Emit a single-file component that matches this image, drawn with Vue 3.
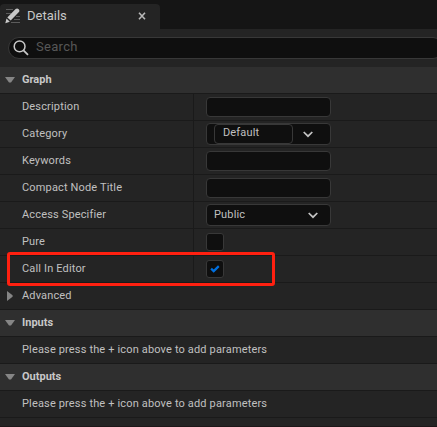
<script setup>
import { ref } from 'vue'

const rows = ref([
  { label: 'Description', kind: 'text' },
  { label: 'Category', kind: 'editable', value: 'Default' },
  { label: 'Keywords', kind: 'text' },
  { label: 'Compact Node Title', kind: 'text' },
  { label: 'Access Specifier', kind: 'select', value: 'Public' },
  { label: 'Pure', kind: 'check', checked: false },
  { label: 'Call In Editor', kind: 'check', checked: true, marked: true },
])
const sections = ['Inputs', 'Outputs']
</script>

<template>
  <div class="panel">
    <div class="tabs">
      <div class="tab">
        <svg class="pencil" width="16" height="16" viewBox="0 0 16 16">
          <path d="M1 1.5h7M1 5.5h5M11 8.5h4M9 11.5h6M6 14.5h9" stroke="#5c5c5c" stroke-width="1" />
          <path d="M0.3 15.2 1.5 10.4 4.8 13.7Z M2.3 9.5 10.6 1.1Q12.2 -0.2 13.7 1.3 15 2.7 13.9 4.1L5.7 12.6Z" fill="#cacaca" />
        </svg>
        <span class="tab-title">Details</span>
        <svg class="close" width="8" height="8" viewBox="0 0 8 8">
          <path d="M1 0.8l6 6.4M7 0.8l-6 6.4" stroke="#b8b8b8" stroke-width="1.6" />
        </svg>
      </div>
    </div>
    <div class="toolbar">
      <div class="search">
        <svg width="16" height="16" viewBox="0 0 16 16" fill="none" stroke="#c8c8c8">
          <circle cx="6.6" cy="6.4" r="5.4" stroke-width="1.5" />
          <path d="M10.5 10.4 15 14.9" stroke-width="1.8" />
        </svg>
        <span class="placeholder">Search</span>
      </div>
    </div>

    <div class="row header">
      <svg class="arrow" width="10" height="6" viewBox="0 0 10 6"><path d="M0 0h10L6 5.5H4Z" fill="#858585" /></svg>
      <span>Graph</span>
    </div>
    <div v-for="r in rows" :key="r.label" class="row">
      <div class="name">{{ r.label }}</div>
      <div class="value">
        <div v-if="r.kind === 'text'" class="field"></div>
        <div v-else-if="r.kind === 'check'" class="checkbox">
          <svg v-if="r.checked" width="10" height="8" viewBox="0 0 10 8">
            <path d="M1.1 3.6 3.7 6.1 8.8 1.1" fill="none" stroke="#0070e0" stroke-width="2.2" />
          </svg>
        </div>
        <div v-else class="combo" :class="r.kind">
          <span class="combo-text">{{ r.value }}</span>
          <svg class="chevron" width="10" height="7" viewBox="0 0 10 7">
            <path d="M0.7 1 5 5.2 9.3 1" fill="none" stroke="#c4c4c4" stroke-width="1.7" />
          </svg>
        </div>
      </div>
      <div v-if="r.marked" class="highlight"></div>
    </div>
    <div class="row">
      <svg class="arrow side" width="6" height="10" viewBox="0 0 6 10"><path d="M0 0 5.6 4.2V5.8L0 10Z" fill="#858585" /></svg>
      <span>Advanced</span>
    </div>

    <template v-for="s in sections" :key="s">
      <div class="row header">
        <svg class="arrow" width="10" height="6" viewBox="0 0 10 6"><path d="M0 0h10L6 5.5H4Z" fill="#858585" /></svg>
        <span>{{ s }}</span>
      </div>
      <div class="row"><div class="hint">Please press the + icon above to add parameters</div></div>
    </template>
    <div class="end"></div>
  </div>
</template>

<style>
body {
  margin: 0;
  background: #242424;
}
</style>

<style scoped>
.panel {
  width: 437px;
  height: 427px;
  overflow: hidden;
  box-sizing: border-box;
  display: flex;
  flex-direction: column;
  background: #242424;
  color: #c0c0c0;
  font: 11px/14px Roboto, sans-serif;
  letter-spacing: 0.155px;
  white-space: nowrap;
}
.panel * {
  box-sizing: border-box;
}
.tabs {
  height: 29px;
  flex: none;
  padding-top: 4px;
  background: #151515;
}
.tab {
  width: 160px;
  height: 25px;
  display: flex;
  align-items: center;
  padding: 0 14px 2px 5px;
  border-radius: 4px 4px 0 0;
  background: #242424;
}
.tab-title {
  margin-left: 6px;
  font-size: 13px;
  letter-spacing: 0;
  color: #c8c8c8;
}
.close {
  margin-left: auto;
}
.toolbar {
  height: 38px;
  flex: none;
  padding: 8px 0 0 8px;
}
.search {
  width: 436px;
  height: 22px;
  display: flex;
  align-items: center;
  padding-left: 4px;
  border: 1px solid #383838;
  border-radius: 11px;
  background: #0f0f0f;
}
.placeholder {
  margin: -3px 0 0 7px;
  font-size: 13px;
  letter-spacing: 0.3px;
  color: #575757;
}
.row {
  position: relative;
  height: 27px;
  flex: none;
  display: flex;
  align-items: center;
  border-bottom: 1px solid #1a1a1a;
}
.header {
  background: #2f2f2f;
  font-weight: 700;
  letter-spacing: 0;
  color: #c8c8c8;
}
.arrow {
  margin: 0 7px 0 5px;
}
.arrow.side {
  margin: 0 9px 0 7px;
}
.name {
  width: 194px;
  height: 26px;
  padding: 6px 0 0 22px;
  border-right: 1px solid #1a1a1a;
}
.value {
  padding-left: 12px;
}
.field,
.combo {
  width: 125px;
  height: 20px;
  border: 1px solid #383838;
  border-radius: 4px;
  background: #0f0f0f;
}
.combo {
  height: 22px;
  display: flex;
  align-items: center;
  padding-left: 7px;
}
.combo-text {
  width: 79px;
  height: 20px;
  padding-top: 3px;
}
.select .combo-text {
  width: 93px;
}
.editable .combo-text {
  padding: 1px 0 0 8px;
  border: 1px solid #383838;
  border-radius: 4px;
}
.chevron {
  margin-left: 10px;
}
.select .chevron {
  margin-left: 1px;
}
.checkbox {
  width: 18px;
  height: 18px;
  display: flex;
  align-items: center;
  justify-content: center;
  border: 1px solid #383838;
  border-radius: 3px;
  background: #0f0f0f;
}
/* Callout frame drawn over the rows */
.highlight {
  position: absolute;
  z-index: 1;
  left: 7px;
  top: -4px;
  width: 268px;
  height: 34px;
  border: 3px solid #ff2010;
  border-radius: 3px;
}
.hint {
  padding: 0 0 0 22px;
}
.end {
  height: 9px;
  border-bottom: 1px solid #1d1718;
}
</style>
